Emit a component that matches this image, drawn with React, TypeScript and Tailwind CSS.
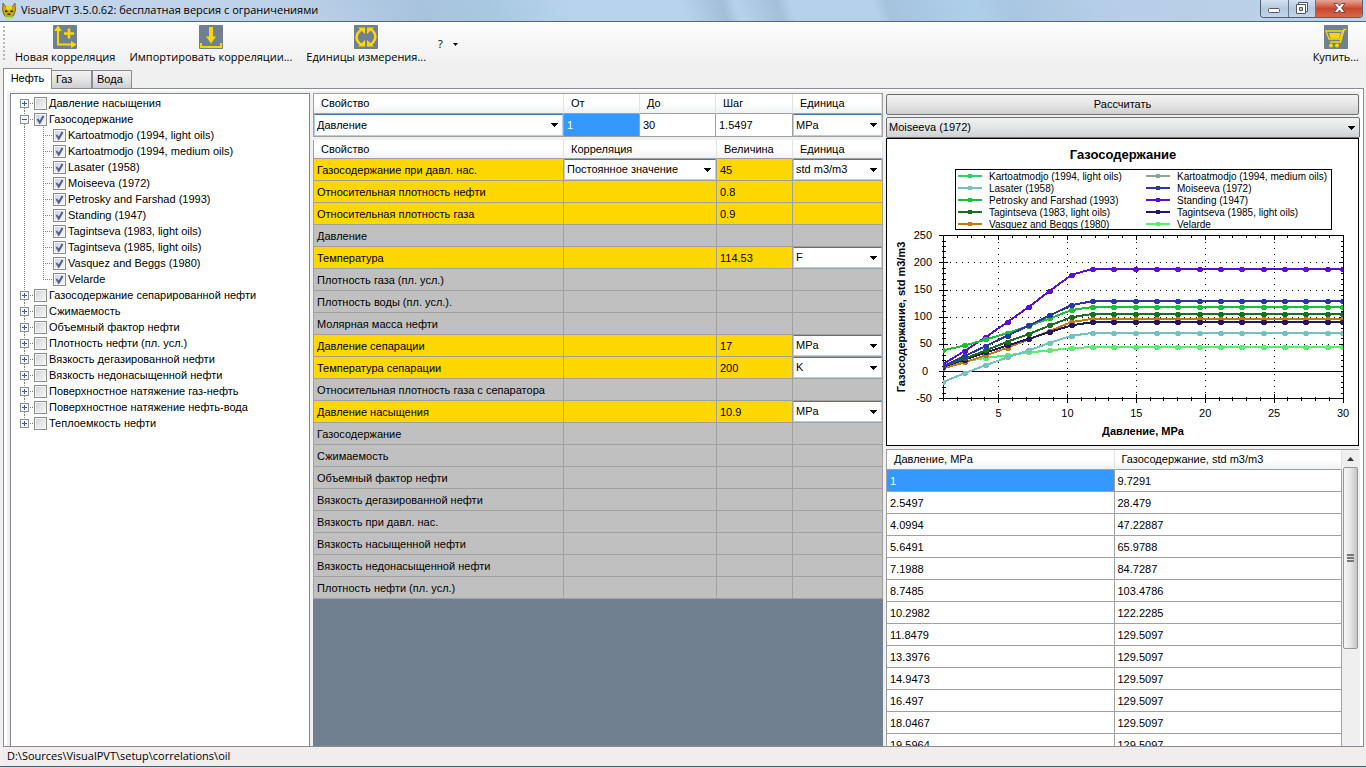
import React, { useState } from "react";

const UI = "font-['Open_Sans','Noto_Sans',sans-serif]";

/* ---------- shared bits ---------- */

function Arrow({ className = "" }: { className?: string }) {
  return (
    <svg width="8" height="4" viewBox="0 0 8 4" className={className} aria-hidden="true" shapeRendering="crispEdges">
      <path d="M0 0h8L4 4z" fill="#000" />
    </svg>
  );
}

function Combo({ label, value, options = [], plain = true }: { label: string; value: string; options?: string[]; plain?: boolean }) {
  const look = plain
    ? "border-[#b5cfe7] border-t-[#3d7bad] bg-white"
    : "border-[#707070] rounded-xs bg-linear-to-b from-[#f2f2f2] via-[#e3e6e6] via-50% to-[#cdd2d2]";
  return (
    <div className="relative h-full w-full">
      <select
        aria-label={label}
        defaultValue={value}
        className={`block h-full w-full appearance-none border pr-4 pl-0.5 text-[11px] leading-none text-black outline-none ${look}`}
      >
        <option>{value}</option>
        {options.map((o) => (
          <option key={o}>{o}</option>
        ))}
      </select>
      <Arrow className="pointer-events-none absolute top-1/2 right-[5px] -mt-0.5" />
    </div>
  );
}

/* ---------- title bar ---------- */

function TitleBar() {
  return (
    <header className="flex h-[22px] shrink-0 items-start justify-between border-b border-[#56657a] bg-[linear-gradient(70deg,#c3d6ea_0%,#bdd3ea_20%,#a9c3dd_31%,#a8c8e2_36%,#b8d3ed_42%,#b8d3ed_50%,#a3bed9_53%,#b7d2ed_54%,#a4bfda_57%,#b6d1ec_58%,#b6d1ec_64%,#a6c3de_65%,#aecfea_71%,#a9c6e2_74%,#b5cde6_80%,#bcd3ea_100%)] pr-[3px] pl-0.5">
      <div className="flex h-[21px] items-center gap-[5px]">
        <svg width="14" height="16" viewBox="0 0 14 16" aria-hidden="true">
          <path d="M1 0l2.500 3.500h7L13 0l.5 7-1.500 5-2 2H4l-2-2L.5 7z" fill="#c9a70c" stroke="#5a4d14" strokeWidth=".7" />
          <path d="M4 3h6v3l-3 1.500L4 6z" fill="#f2d21d" />
          <path d="M3 7.500h2.500V9H3zM8.500 7.500H11V9H8.500z" fill="#222" />
          <path d="M5.500 10.500h3V12h-3z" fill="#3b3208" />
          <path d="M2 13.500h10L10.500 16h-7z" fill="#a9e26e" />
        </svg>
        <h1 className={`${UI} text-[11px] text-black`}>VisualPVT 3.5.0.62: бесплатная версия с ограничениями</h1>
      </div>
      <div className="flex h-[18px] overflow-hidden rounded-b-[4px] border border-t-0 border-[#515d6c]">
        <button aria-label="Свернуть" className="flex w-7 items-end justify-center border-r border-[#67778a] bg-linear-to-b from-[#d4e2f1] via-[#b3c9e0] via-50% to-[#bfd5ec] pb-1">
          <svg width="13" height="5" viewBox="0 0 13 5"><rect x=".5" y=".5" width="11" height="4" rx="1" fill="#fff" stroke="#535666" /></svg>
        </button>
        <button aria-label="Восстановить" className="flex w-[27px] items-start justify-center border-r border-[#67778a] bg-linear-to-b from-[#d4e2f1] via-[#b3c9e0] via-50% to-[#bfd5ec] pt-0.5">
          <svg width="12" height="12" viewBox="0 0 12 12">
            <path d="M2.500.5h9v9h-9z" fill="#f4f6f9" stroke="#535666" />
            <path d="M.5 2.500h9v9h-9z" fill="#fff" stroke="#535666" />
            <path d="M3.500 5.500h3v3h-3z" fill="#b7cce2" stroke="#535666" />
          </svg>
        </button>
        <button aria-label="Закрыть" className="flex w-[46px] items-start justify-center bg-linear-to-b from-[#e4a598] via-[#c9452c] via-50% to-[#d5694a] pt-[3px]">
          <svg width="13" height="10" viewBox="0 0 13 10">
            <path d="M1 .5h3.300l2.200 2.400L8.700 .5H12L8.600 5l3.400 4.500H8.700L6.500 7.100 4.300 9.500H1L4.400 5z" fill="#fff" stroke="#5b4048" strokeWidth=".9" />
          </svg>
        </button>
      </div>
    </header>
  );
}

/* ---------- toolbar ---------- */

function ToolIcon({ children }: { children: React.ReactNode }) {
  return (
    <svg width="24" height="24" viewBox="0 0 24 24" fill="none" stroke="#ffd700" aria-hidden="true">
      <rect width="24" height="24" rx="1" fill="#708090" stroke="none" />
      {children}
    </svg>
  );
}

function ToolButton({ text, children }: { text: string; children: React.ReactNode }) {
  return (
    <button className={`${UI} flex flex-col items-center text-[11px] leading-4 whitespace-nowrap text-black`}>
      <ToolIcon>{children}</ToolIcon>
      {text}
    </button>
  );
}

function Toolbar() {
  return (
    <div className="flex h-[46px] shrink-0 items-start justify-between bg-linear-to-b from-[#fdfdfd] to-[#efefef] pt-[3px] pr-[7px] pl-[3px]">
      <div className="flex items-start">
        <svg width="3" height="36" viewBox="0 0 3 36" className="mr-[9px]" aria-hidden="true">
          <path d="M1 1v35" stroke="#b8b8b8" strokeWidth="2" strokeDasharray="2 2" />
        </svg>
        <div className="flex gap-3.5">
          <ToolButton text="Новая корреляция">
            <path d="M5 4v15.500h14" strokeWidth="2" />
            <path d="M5 .5L9 6H1zM23.500 19.500L18 23v-7z" fill="#ffd700" stroke="none" />
            <path d="M11 8.500h10M16 3.500v10" strokeWidth="2.500" />
          </ToolButton>
          <ToolButton text="Импортировать корреляции...">
            <path d="M12 2v10" strokeWidth="4" />
            <path d="M12 18.500L7 11.500h10z" fill="#ffd700" stroke="none" />
            <path d="M2 18v4h20v-4" strokeWidth="2" />
          </ToolButton>
          <ToolButton text="Единицы измерения...">
            <path d="M7.500 4.500C1 9 1 15.500 7.500 20M16.500 4C23 8.500 23 15 16.500 19.500" strokeWidth="2.500" />
            <path d="M4 2.500h7v6.500zM4 21.500h7V15zM20 2.500h-7V9zM20 21.500h-7V15z" fill="#ffd700" stroke="none" />
          </ToolButton>
        </div>
        <button aria-label="Справка" className={`${UI} ml-3 flex h-[38px] items-center gap-2.5 text-[11px] text-black`}>
          ?<svg width="5" height="3" viewBox="0 0 5 3" aria-hidden="true"><path d="M0 0h5L2.500 3z" fill="#000" /></svg>
        </button>
      </div>
      <ToolButton text="Купить...">
        <path d="M22.500 4.500H20L16.500 17H6" strokeWidth="1.500" />
        <path d="M2 6h16.500l-2.500 8H5z" strokeWidth="1.300" />
        <path d="M5 8h11.500l-1.500 5H6.500z" fill="#ffd700" stroke="none" />
        <circle cx="7" cy="20.500" r="2" fill="#ffd700" stroke="none" />
        <circle cx="13" cy="20.500" r="2" fill="#ffd700" stroke="none" />
      </ToolButton>
    </div>
  );
}

/* ---------- tabs ---------- */

function Tabs() {
  const idle = "h-[18px] border border-b-0 border-[#898c95] bg-linear-to-b from-[#f2f2f2] via-[#e4e4e4] via-50% to-[#cfcfcf] pl-1 text-left";
  return (
    <div role="tablist" className="flex shrink-0 items-end pl-[3px] text-[11px] text-black">
      <button role="tab" aria-selected="true" className="z-10 -mb-px h-[21px] w-[49px] border border-b-0 border-[#898c95] bg-white pb-0.5">
        Нефть
      </button>
      <button role="tab" aria-selected="false" className={`${idle} -ml-px w-[41px]`}>Газ</button>
      <button role="tab" aria-selected="false" className={`${idle} w-10`}>Вода</button>
    </div>
  );
}

/* ---------- correlation tree ---------- */

type Group = { name: string; children?: string[] };

const groups: Group[] = [
  { name: "Давление насыщения" },
  {
    name: "Газосодержание",
    children: [
      "Kartoatmodjo (1994, light oils)",
      "Kartoatmodjo (1994, medium oils)",
      "Lasater (1958)",
      "Moiseeva (1972)",
      "Petrosky and Farshad (1993)",
      "Standing (1947)",
      "Tagintseva (1983, light oils)",
      "Tagintseva (1985, light oils)",
      "Vasquez and Beggs (1980)",
      "Velarde",
    ],
  },
  { name: "Газосодержание сепарированной нефти" },
  { name: "Сжимаемость" },
  { name: "Объемный фактор нефти" },
  { name: "Плотность нефти (пл. усл.)" },
  { name: "Вязкость дегазированной нефти" },
  { name: "Вязкость недонасыщенной нефти" },
  { name: "Поверхностное натяжение газ-нефть" },
  { name: "Поверхностное натяжение нефть-вода" },
  { name: "Теплоемкость нефти" },
];

function Check({ name, on }: { name: string; on: boolean }) {
  return (
    <label className="flex items-center gap-0.5 whitespace-nowrap">
      <span className="relative block size-[13px]">
        <input
          type="checkbox"
          defaultChecked={on}
          className="peer block size-[13px] appearance-none border border-[#8e8f8f] bg-linear-to-br from-[#cdd2d9] to-[#f8f8f8] shadow-[inset_0_0_0_1px_#f4f4f4]"
        />
        <svg width="13" height="13" viewBox="0 0 13 13" className="pointer-events-none absolute inset-0 hidden peer-checked:block">
          <path d="M3.500 6l2.300 3.500L9.500 3" fill="none" stroke="#4a5f97" strokeWidth="2" />
        </svg>
      </span>
      <span>{name}</span>
    </label>
  );
}

function Tree() {
  const [open, setOpen] = useState(true);
  return (
    <ul className="min-h-0 overflow-hidden border border-b-0 border-[#828790] bg-white pt-px text-[11px] leading-4 text-black">
      {groups.map((g, i) => {
        const first = i === 0;
        const last = i === groups.length - 1;
        const expanded = Boolean(g.children) && open;
        return (
          <li key={g.name}>
            <div className="flex h-4 items-center">
              <button aria-label={g.name} aria-expanded={expanded} onClick={() => g.children && setOpen(!open)} className="block">
                <svg width="23" height="16" viewBox="0 0 23 16" shapeRendering="crispEdges">
                  {!first && <path d="M13.500 0v4" stroke="#808080" strokeDasharray="1 1" />}
                  {!last && <path d="M13.500 13v3" stroke="#808080" strokeDasharray="1 1" />}
                  <path d="M19 8.500h4" stroke="#808080" strokeDasharray="1 1" />
                  <rect x="9.500" y="4.500" width="8" height="8" fill="#f6f6f6" stroke="#919191" />
                  <path d={expanded ? "M11 8.500h5" : "M11 8.500h5M13.500 6v5"} stroke="#3b5aa5" />
                </svg>
              </button>
              <Check name={g.name} on={Boolean(g.children)} />
            </div>
            {expanded && (
              <ul>
                {g.children!.map((c, k) => (
                  <li key={c} className="flex h-4 items-center">
                    <svg width="42" height="16" viewBox="0 0 42 16" shapeRendering="crispEdges" aria-hidden="true">
                      <path d="M13.500 0v16" stroke="#808080" strokeDasharray="1 1" />
                      <path d={k === g.children!.length - 1 ? "M32.500 0v9" : "M32.500 0v16"} stroke="#808080" strokeDasharray="1 1" />
                      <path d="M34 8.500h8" stroke="#808080" strokeDasharray="1 1" />
                    </svg>
                    <Check name={c} on />
                  </li>
                ))}
              </ul>
            )}
          </li>
        );
      })}
    </ul>
  );
}

/* ---------- property grids ---------- */

const TH = "border-r border-[#e0e2e5] bg-linear-to-b from-white via-white via-50% to-[#f1f2f4] p-0 pl-[7px] text-left font-normal";

function RangeTable() {
  return (
    <table className="w-full shrink-0 table-fixed border-separate border-spacing-0 border border-[#a0a0a0] bg-white text-[11px] leading-none text-black">
      <colgroup>
        <col className="w-[250px]" />
        <col className="w-[76px]" />
        <col className="w-[76px]" />
        <col className="w-[77px]" />
        <col />
      </colgroup>
      <thead>
        <tr className="h-5">
          {["Свойство", "От", "До", "Шаг", "Единица"].map((h) => (
            <th key={h} scope="col" className={`${TH} border-b border-b-[#a0a0a0]`}>{h}</th>
          ))}
        </tr>
      </thead>
      <tbody>
        <tr className="h-[22px]">
          <td className="h-[22px] border-r border-[#a0a0a0] p-0"><Combo label="Свойство" value="Давление" options={["Температура"]} /></td>
          <td className="border-r border-[#a0a0a0] bg-[#3399ff] p-0 pl-[3px] text-white">1</td>
          <td className="border-r border-[#a0a0a0] p-0 pl-[3px]">30</td>
          <td className="border-r border-[#a0a0a0] p-0 pl-[3px]">1.5497</td>
          <td className="h-[22px] p-0"><Combo label="Единица" value="MPa" /></td>
        </tr>
      </tbody>
    </table>
  );
}

type Prop = { name: string; corr?: string; value?: string; unit?: string };

const props: Prop[] = [
  { name: "Газосодержание при давл. нас.", corr: "Постоянное значение", value: "45", unit: "std m3/m3" },
  { name: "Относительная плотность нефти", value: "0.8" },
  { name: "Относительная плотность газа", value: "0.9" },
  { name: "Давление" },
  { name: "Температура", value: "114.53", unit: "F" },
  { name: "Плотность газа (пл. усл.)" },
  { name: "Плотность воды (пл. усл.)." },
  { name: "Молярная масса нефти" },
  { name: "Давление сепарации", value: "17", unit: "MPa" },
  { name: "Температура сепарации", value: "200", unit: "K" },
  { name: "Относительная плотность газа с сепаратора" },
  { name: "Давление насыщения", value: "10.9", unit: "MPa" },
  { name: "Газосодержание" },
  { name: "Сжимаемость" },
  { name: "Объемный фактор нефти" },
  { name: "Вязкость дегазированной нефти" },
  { name: "Вязкость при давл. нас." },
  { name: "Вязкость насыщенной нефти" },
  { name: "Вязкость недонасыщенной нефти" },
  { name: "Плотность нефти (пл. усл.)" },
];

function PropertyTable() {
  const td = "h-[22px] border-r border-b border-[#a0a0a0] p-0";
  return (
    <table className="w-full table-fixed border-separate border-spacing-0 border-l border-[#a0a0a0] text-[11px] leading-none text-black">
      <colgroup>
        <col className="w-[250px]" />
        <col className="w-[153px]" />
        <col className="w-[76px]" />
        <col />
      </colgroup>
      <thead>
        <tr className="h-[19px]">
          {["Свойство", "Корреляция", "Величина", "Единица"].map((h) => (
            <th key={h} scope="col" className={`${TH} border-b border-b-[#a0a0a0]`}>{h}</th>
          ))}
        </tr>
      </thead>
      <tbody>
        {props.map((p) => (
          <tr key={p.name} className={p.value ? "bg-[#ffd700]" : "bg-[#c0c0c0]"}>
            <td className={`${td} pt-px pl-[3px]`}>{p.name}</td>
            <td className={td}>{p.corr && <Combo label={`${p.name}: корреляция`} value={p.corr} />}</td>
            <td className={`${td} pt-px pl-[3px]`}>{p.value}</td>
            <td className={td}>{p.unit && <Combo label={`${p.name}: единица`} value={p.unit} />}</td>
          </tr>
        ))}
      </tbody>
    </table>
  );
}

/* ---------- chart ---------- */

type Series = { name: string; color: string; y: number[] };

const series: Series[] = [
  { name: "Kartoatmodjo (1994, light oils)", color: "#2bd365", y: [] },
  { name: "Kartoatmodjo (1994, medium oils)", color: "#8fa593", y: [] },
  { name: "Lasater (1958)", color: "#73c2bd", y: [-19, -3, 12, 26, 39, 53, 66, 71] },
  { name: "Moiseeva (1972)", color: "#2b36a8", y: [9.7, 28.5, 47.2, 66, 84.7, 103.5, 122.2, 129.5] },
  { name: "Petrosky and Farshad (1993)", color: "#18c234", y: [39, 48, 59, 71, 84, 98, 113, 119] },
  { name: "Standing (1947)", color: "#560fdc", y: [14, 38, 64, 91, 119, 149, 178, 189] },
  { name: "Tagintseva (1983, light oils)", color: "#1a6e22", y: [10, 24, 39, 55, 69, 85, 100, 106] },
  { name: "Tagintseva (1985, light oils)", color: "#251566", y: [9, 22, 35, 48, 60, 73, 85, 91] },
  { name: "Vasquez and Beggs (1980)", color: "#c4780f", y: [6, 17, 30, 44, 59, 75, 91, 97] },
  { name: "Velarde", color: "#5aef6b", y: [12, 19, 25, 30, 35, 39, 43, 45] },
];

const STEP = 1.5497;
const px = (v: number) => 57.5 + (v - 1) * 13.776;
const py = (v: number) => 233.5 - v * 0.5433;

function range(a: number, b: number, s: number) {
  const out: number[] = [];
  for (let v = a; v <= b + 1e-6; v += s) out.push(v);
  return out;
}

function Chart() {
  const points = (s: Series) =>
    Array.from({ length: 20 }, (_, i) => [px(Math.min(1 + i * STEP, 30)), py(s.y[Math.min(i, 7)])]);
  return (
    <svg
      viewBox="0 0 474 308"
      className="block w-full shrink-0 bg-white font-['Liberation_Sans',Arial,sans-serif]"
      role="img"
      aria-label="Газосодержание"
    >
      <rect x=".5" y=".5" width="472" height="307" fill="#fff" stroke="#000" shapeRendering="crispEdges" />
      <text x="237" y="21" textAnchor="middle" fontSize="13" fontWeight="700">Газосодержание</text>

      <g shapeRendering="crispEdges" fill="none" stroke="#000">
        <rect x="69.500" y="31.500" width="376" height="60" />
        {[5, 10, 15, 20, 25].map((v) => (
          <path key={v} d={`M${Math.floor(px(v)) + 0.5} 98v162`} strokeDasharray="1 5" />
        ))}
        {[50, 100, 150, 200].map((v) => (
          <path key={v} d={`M58 ${Math.floor(py(v)) + 0.5}h399`} strokeDasharray="1 5" />
        ))}
        <path d="M57.500 97.500h399.500v163H57.500zM57 233.500h400" />
        {range(1, 30, 1).map((v) => {
          const x = Math.floor(px(v)) + 0.5;
          return v % 5 ? <path key={v} d={`M${x} 98v2M${x} 259v4`} /> : <path key={v} d={`M${x} 98v4M${x} 256v9`} />;
        })}
        {range(-50, 250, 10).map((v) => {
          const y = Math.floor(py(v)) + 0.5;
          return v % 50 ? <path key={v} d={`M56 ${y}h4M455 ${y}h2`} /> : <path key={v} d={`M53 ${y}h9M453 ${y}h4`} />;
        })}
      </g>

      {[...series].reverse().filter((s) => s.y.length).map((s) => (
        <g key={s.name} shapeRendering="crispEdges">
          <polyline points={points(s).map((p) => p.join(",")).join(" ")} fill="none" stroke={s.color} strokeWidth="2" />
          {points(s).map(([x, y], i) => {
            const edge = i === 0 || i === 19;
            const cx = Math.round(x);
            const cy = Math.round(y);
            return (
              <g key={i} fill={s.color}>
                <rect x={cx - (i === 0 ? 1 : 3)} y={cy - 1} width={edge ? 3 : 6} height="3" />
                <rect x={cx - (i === 0 ? 1 : 2)} y={cy - 2} width={edge ? 2 : 4} height="5" />
              </g>
            );
          })}
        </g>
      ))}

      {series.map((s, i) => {
        const x = 72 + (i % 2) * 188;
        const y = 38 + Math.floor(i / 2) * 12;
        return (
          <g key={s.name}>
            <path d={`M${x} ${y}h24`} stroke={s.color} strokeWidth="2" />
            <rect x={x + 10} y={y - 2} width="4" height="4" fill={s.color} />
            <text x={x + 31} y={y + 4} fontSize="10">{s.name}</text>
          </g>
        );
      })}

      <g fontSize="11">
        {range(-50, 250, 50).map((v) => (
          <text key={v} x={v === 0 ? 42 : 46} y={Math.round(py(v)) + 3} textAnchor="end">{v}</text>
        ))}
        {range(5, 30, 5).map((v) => (
          <text key={v} x={px(v)} y="279" textAnchor="middle">{v}</text>
        ))}
      </g>
      <text x="257" y="297" textAnchor="middle" fontSize="11" fontWeight="700">Давление, MPa</text>
      <text transform="translate(19 179) rotate(-90)" textAnchor="middle" fontSize="11" fontWeight="700">
        Газосодержание, std m3/m3
      </text>
    </svg>
  );
}

/* ---------- results ---------- */

const results: [string, string][] = [
  ["1", "9.7291"],
  ["2.5497", "28.479"],
  ["4.0994", "47.22887"],
  ["5.6491", "65.9788"],
  ["7.1988", "84.7287"],
  ["8.7485", "103.4786"],
  ["10.2982", "122.2285"],
  ["11.8479", "129.5097"],
  ["13.3976", "129.5097"],
  ["14.9473", "129.5097"],
  ["16.497", "129.5097"],
  ["18.0467", "129.5097"],
  ["19.5964", "129.5097"],
];

function Results() {
  return (
    <div className="mt-[3px] mr-px flex min-h-0 flex-1 items-stretch overflow-hidden border-t border-l border-[#a0a0a0] bg-white">
      <table className="w-full table-fixed border-separate border-spacing-0 self-start text-[11px] leading-none text-black">
        <thead>
          <tr className="h-5">
            <th scope="col" className={`${TH} border-b border-b-[#a0a0a0]`}>Давление, MPa</th>
            <th scope="col" className={`${TH} border-b border-b-[#a0a0a0]`}>Газосодержание, std m3/m3</th>
          </tr>
        </thead>
        <tbody>
          {results.map(([p, v], i) => (
            <tr key={p}>
              <td className={`h-[22px] border-r border-b border-[#a0a0a0] p-0 pt-px pl-[3px] ${i === 0 ? "bg-[#3399ff] text-white" : ""}`}>{p}</td>
              <td className="h-[22px] border-r border-b border-[#a0a0a0] p-0 pt-px pl-[3px]">{v}</td>
            </tr>
          ))}
        </tbody>
      </table>
      <div className="flex w-[17px] shrink-0 flex-col bg-[#efefef] px-px">
        <div className="flex h-[17px] items-center justify-center">
          <svg width="7" height="4" viewBox="0 0 7 4" aria-hidden="true"><path d="M0 4h7L3.500 0z" fill="#333" /></svg>
        </div>
        <div className="flex h-[182px] flex-col items-center justify-center gap-px rounded-xs border border-[#979797] bg-linear-to-r from-[#f5f5f5] via-[#e6e6e6] via-50% to-[#c4c4c6]">
          <span className="h-0.5 w-[7px] bg-[#777]" />
          <span className="h-0.5 w-[7px] bg-[#777]" />
          <span className="h-0.5 w-[7px] bg-[#777]" />
        </div>
      </div>
    </div>
  );
}

/* ---------- window ---------- */

export default function App() {
  return (
    <div className="flex h-screen flex-col overflow-hidden bg-[#f0f0f0] font-['Liberation_Sans',Arial,sans-serif]">
      <TitleBar />
      <Toolbar />
      <Tabs />
      <main className="mr-0.5 ml-[3px] flex min-h-0 flex-1 flex-col border border-[#898c95] bg-white px-[3px] pt-0.5">
        <div className="grid min-h-0 flex-1 grid-cols-[300px_570px_minmax(0,1fr)] grid-rows-[minmax(0,1fr)] gap-[3px] bg-[#f0f0f0] pt-0.5 pl-[3px]">
          <Tree />
          <section className="flex min-h-0 flex-col gap-[3px] overflow-hidden">
            <RangeTable />
            <div className="min-h-0 flex-1 overflow-hidden bg-[#708090]">
              <PropertyTable />
            </div>
          </section>
          <section className="flex min-h-0 flex-col overflow-hidden">
            <button className="mt-px mr-px h-[21px] shrink-0 rounded-xs border border-[#707070] bg-linear-to-b from-[#f2f2f2] via-[#e6e6e6] via-50% to-[#cfcfcf] text-[11px] text-black">
              Рассчитать
            </button>
            <div className="mt-0.5 h-[21px] shrink-0">
              <Combo label="Корреляция" value="Moiseeva (1972)" options={["Standing (1947)", "Lasater (1958)", "Velarde"]} plain={false} />
            </div>
            <Chart />
            <Results />
          </section>
        </div>
      </main>
      <footer className={`${UI} ml-[3px] flex h-[19px] shrink-0 items-center bg-[#f1edec] pl-1 text-[11px] text-black`}>
        D:\Sources\VisualPVT\setup\correlations\oil
      </footer>
      <div className="h-0.5 shrink-0 border-t border-[#4c5a68] bg-[#cfe0ee]" />
    </div>
  );
}
